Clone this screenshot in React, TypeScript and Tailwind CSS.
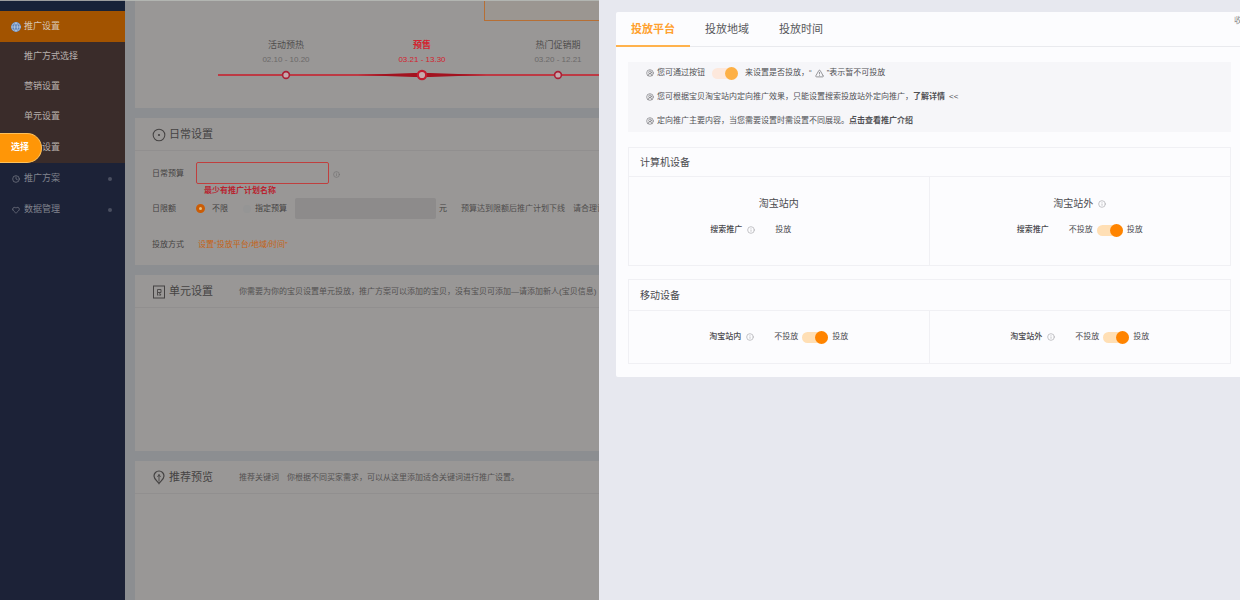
import React, { useState } from "react";
import { Globe, CircleDot, Info, Clock, Heart, TriangleAlert, CircleUserRound } from "lucide-react";

type ToggleProps = { label: string; soft?: boolean };

function Toggle({ label, soft }: ToggleProps) {
  const [on, setOn] = useState(true);
  return (
    <label className="flex h-[14px] w-[26px] shrink-0 items-center">
      <input
        type="checkbox"
        className="peer sr-only"
        aria-label={label}
        checked={on}
        onChange={() => setOn(!on)}
      />
      <span
        className={
          "flex h-[11px] w-full items-center rounded-full " +
          (on ? "justify-end " : "justify-start ") +
          (soft ? "bg-[#fde8dc]" : "bg-[#ffdfb5]")
        }
      >
        <span
          className={"h-[13px] w-[13px] shrink-0 rounded-full " + (soft ? "bg-[#fdb046]" : "bg-[#ff8400]")}
        />
      </span>
    </label>
  );
}

const steps = [
  { name: "活动预热", date: "02.10 - 10.20", active: false },
  { name: "预售", date: "03.21 - 13.30", active: true },
  { name: "热门促销期", date: "03.20 - 12.21", active: false },
];

function Steps() {
  return (
    <ol className="mt-[17px] flex w-max pl-[83px]">
      {steps.map((s) => (
        <li
          key={s.name}
          className={"flex w-[136px] flex-col items-center " + (s.active ? "text-[#d3232f]" : "text-[#4f4d4d]")}
        >
          <span className={"text-[9px] leading-[14px] " + (s.active ? "font-bold" : "")}>{s.name}</span>
          <span
            className={"mt-px text-[8px] leading-[14px] " + (s.active ? "" : "text-[#6b6969]")}
          >
            {s.date}
          </span>
          <svg className="block h-4 w-full" viewBox="0 0 136 16" aria-hidden="true">
            <path d="M0 8H136" stroke="#bd3a44" strokeWidth="2" />
            {s.active && <path d="M4 8L60 6H76L132 8L76 10H60Z" fill="#a3121f" />}
            <circle
              cx="68"
              cy="8"
              r={s.active ? 4.2 : 3.4}
              fill="#c6a9ad"
              stroke={s.active ? "#c11c30" : "#a91f35"}
              strokeWidth={s.active ? 2.2 : 1.6}
            />
          </svg>
        </li>
      ))}
    </ol>
  );
}

type PanelProps = {
  icon: React.ReactNode;
  title: string;
  note?: string;
  className?: string;
  children?: React.ReactNode;
};

function Panel({ icon, title, note, className, children }: PanelProps) {
  return (
    <section className={"bg-[#999796] " + (className ?? "")}>
      <header className="flex h-[33px] items-center whitespace-nowrap border-b border-[#918f8f] pl-[17px] pt-px">
        {icon}
        <h2 className="ml-[3px] w-[70px] shrink-0 text-[11px] text-[#454343]">{title}</h2>
        {note && <p className="text-[8px] text-[#535151]">{note}</p>}
      </header>
      {children}
    </section>
  );
}

function HintIcon() {
  return <Info className="h-[8px] w-[8px] shrink-0 text-[#a9a9ad]" aria-hidden="true" />;
}

function ToggleRow({ name, hint }: { name: string; hint?: boolean }) {
  return (
    <div className="flex items-center justify-center text-[8px] leading-[14px]">
      <span className="font-medium">{name}</span>
      {hint && (
        <span className="ml-[5px]">
          <HintIcon />
        </span>
      )}
      <span className="ml-[20px] mr-[4px]">不投放</span>
      <Toggle label={name} />
      <span className="ml-[4px]">投放</span>
    </div>
  );
}

const subItems = ["推广方式选择", "营销设置", "单元设置"];

function TipIcon() {
  return <CircleUserRound className="mr-[3px] h-[8px] w-[8px] shrink-0 text-[#77777b]" aria-hidden="true" />;
}

export default function App() {
  const [tab, setTab] = useState("投放平台");
  return (
    <div className="flex min-h-screen overflow-hidden bg-[#8c8e91] font-['Liberation_Sans','Noto_Sans_CJK_SC',sans-serif] text-[#4a4a4e]">
      <nav className="w-[125px] shrink-0 border-t border-[#9c9e9e] bg-[#1c2237] text-[9px]">
        <div className="h-[10px] bg-[#172238]" />
        <a href="#promotion" className="flex h-[31px] items-center bg-[#a25300] pl-[11px] text-[#d8c6b4]">
          <Globe className="mr-[3px] h-[10px] w-[10px] rounded-full bg-[#5d82b8] text-[#b9c9df]" />
          推广设置
        </a>
        <ul className="bg-[#3a2c2a] text-[#b7b0ad]">
          {subItems.map((s) => (
            <li key={s}>
              <a href="#sub" className="flex h-[30px] items-center pl-[24px]">
                {s}
              </a>
            </li>
          ))}
          <li className="flex h-[31px] items-center">
            <button
              type="button"
              className="h-[30px] w-[42px] shrink-0 rounded-r-full border border-l-0 border-[#ffc15a] bg-[#ff9607] pr-px text-[9px] font-bold text-white"
            >
              选择
            </button>
            <a href="#sub">设置</a>
          </li>
        </ul>
        <a href="#reports" className="flex h-[31px] items-center pl-[12px] pr-[13px] text-[#81848e]">
          <Clock className="mr-[4px] h-[8px] w-[8px]" />
          推广方案
          <span className="ml-auto h-[4px] w-[4px] rounded-full bg-[#4a4f60]" />
        </a>
        <a href="#tools" className="flex h-[31px] items-center pl-[12px] pr-[13px] text-[#81848e]">
          <Heart className="mr-[4px] h-[8px] w-[8px]" />
          数据管理
          <span className="ml-auto h-[4px] w-[4px] rounded-full bg-[#4a4f60]" />
        </a>
      </nav>

      <main className="flex w-[474px] shrink-0 flex-col gap-[10px] overflow-hidden border-t border-[#b2b5b1] pl-[10px]">
        <section className="h-[107px] bg-[#999796]">
          <div className="ml-auto h-[20px] w-[115px] border-b border-l border-[#b66f35] bg-[#9b9691]" />
          <Steps />
        </section>

        <Panel
          title="日常设置"
          className="h-[147px]"
          icon={<CircleDot className="h-[14px] w-[14px] text-[#454343]" strokeWidth={1.8} />}
        >
          <form className="whitespace-nowrap pl-[17px] text-[8px] text-[#454343]">
            <div className="flex h-[34px] items-end">
              <label htmlFor="name" className="mb-[5px] w-[44px]">
                日常预算
              </label>
              <input
                id="name"
                className="mb-px h-[22px] w-[133px] rounded-[2px] border border-[#bf3f3e] bg-transparent px-1 outline-none"
              />
              <Info className="mb-[7px] ml-[4px] h-[7px] w-[7px] text-[#706e6e]" />
            </div>
            <p className="pl-[52px] text-[8px] font-bold leading-[11px] text-[#b8232f]">最少有推广计划名称</p>
            <div className="mt-[2px] flex h-[21px] items-center">
              <span className="w-[44px] shrink-0">日限额</span>
              <label className="flex shrink-0 items-center">
                <input
                  type="radio"
                  name="limit"
                  defaultChecked
                  className="mr-[7px] h-[9px] w-[9px] appearance-none rounded-full border-[3px] border-[#cb5c05] bg-[#e8c17e]"
                />
                不限
              </label>
              <label className="ml-[15px] flex shrink-0 items-center">
                <input
                  type="radio"
                  name="limit"
                  className="mr-[4px] h-[8px] w-[8px] appearance-none rounded-full bg-[#959595]"
                />
                指定预算
              </label>
              <input
                disabled
                aria-label="指定预算金额"
                className="ml-[8px] h-[21px] w-[141px] shrink-0 rounded-[2px] bg-[#8d8b8b]"
              />
              <span className="ml-[3px] w-[22px] shrink-0">元</span>
              <span className="text-[#4f4d4d]">预算达到限额后推广计划下线</span>
              <span className="ml-[8px] text-[#4f4d4d]">请合理设置</span>
            </div>
            <div className="mt-[19px] flex h-[14px] items-center">
              <span className="w-[46px]">投放方式</span>
              <a href="#platform" className="text-[#c56316]">
                设置“投放平台/地域/时间”
              </a>
            </div>
          </form>
        </Panel>

        <Panel
          title="单元设置"
          className="h-[176px]"
          note="你需要为你的宝贝设置单元投放，推广方案可以添加的宝贝，没有宝贝可添加—请添加新人(宝贝信息)"
          icon={
            <svg className="h-[14px] w-[14px]" viewBox="0 0 14 14" fill="none" stroke="#454343" aria-hidden="true">
              <rect x="1.5" y="1" width="11" height="12" />
              <path d="M5.5 10.5V4.5H9V7.5H6M7 7.5L9 10H6.5" strokeWidth="0.9" />
            </svg>
          }
        />

        <Panel
          title="推荐预览"
          className="flex-1"
          note="推荐关键词　你根据不同买家需求，可以从这里添加适合关键词进行推广设置。"
          icon={
            <svg className="h-[15px] w-[14px]" viewBox="0 0 14 15" fill="none" stroke="#454343" aria-hidden="true">
              <path d="M7 13.5C6 11.5 2 9.5 2 6A5 5 0 0 1 12 6C12 9.5 8 11.5 7 13.5Z" strokeWidth="1.2" />
              <path d="M7 4.5V11.5M7 4.5L5.5 7M7 4.5L8.5 7" strokeWidth="0.9" />
            </svg>
          }
        />
      </main>

      <aside className="min-w-0 flex-1 bg-[#e7e8ef] pl-[17px] pt-[12px]">
        <div className="h-[365px] rounded-l-[2px] bg-[#fcfcfe]">
          <div className="flex h-[35px] border-b border-[#e9eaee]" role="tablist">
            {["投放平台", "投放地域", "投放时间"].map((t) => (
              <button
                key={t}
                type="button"
                role="tab"
                aria-selected={tab === t}
                onClick={() => setTab(t)}
                className={
                  "h-[35px] w-[74px] border-b-2 pt-[2px] text-[11px] " +
                  (tab === t ? "border-[#ffb24d] font-bold text-[#ffa02e]" : "border-transparent text-[#58585b]")
                }
              >
                {t}
              </button>
            ))}
            <a href="#close" className="ml-auto w-[6px] overflow-hidden whitespace-nowrap text-[8px] leading-[17px] text-[#8d8d91]">
              收起
            </a>
          </div>

          <div className="ml-[12px] mr-[9px] mt-[15px] flex h-[70px] flex-col justify-between whitespace-nowrap bg-[#f6f6f9] py-[4px] pl-[18px] text-[8px] leading-[14px] text-[#505054]">
            <p className="flex items-center">
              <TipIcon />
              您可通过按钮
              <span className="ml-[7px] mr-[7px]">
                <Toggle label="投放按钮" soft />
              </span>
              来设置是否投放，“
              <TriangleAlert className="mx-[3px] h-[9px] w-[9px] text-[#77777b]" />
              ”表示暂不可投放
            </p>
            <p className="flex items-center">
              <TipIcon />
              您可根据宝贝淘宝站内定向推广效果，只能设置搜索投放站外定向推广，
              <b className="font-bold">了解详情</b>
              <span className="ml-[4px]">&lt;&lt;</span>
            </p>
            <p className="flex items-center">
              <TipIcon />
              定向推广主要内容，当您需要设置时需设置不同展现。
              <b className="font-bold">点击查看推广介绍</b>
            </p>
          </div>

          <section className="ml-[12px] mr-[9px] mt-[15px] border border-[#f0f0f4]">
            <h3 className="flex h-[29px] items-center border-b border-[#f0f0f4] pl-[11px] text-[10px]">计算机设备</h3>
            <div className="grid h-[88px] grid-cols-2 divide-x divide-[#f0f0f4]">
              <div className="pt-[20px]">
                <h4 className="text-center text-[10px] leading-[14px]">淘宝站内</h4>
                <div className="mx-auto mt-[12px] flex w-[137px] items-center text-[8px] leading-[14px]">
                  <span className="mr-[5px] font-medium">搜索推广</span>
                  <HintIcon />
                  <span className="ml-[20px]">投放</span>
                </div>
              </div>
              <div className="pt-[20px]">
                <h4 className="flex items-center justify-center gap-[5px] text-[10px] leading-[14px]">
                  淘宝站外
                  <HintIcon />
                </h4>
                <div className="mt-[12px]">
                  <ToggleRow name="搜索推广" />
                </div>
              </div>
            </div>
          </section>

          <section className="ml-[12px] mr-[9px] mt-[13px] border border-[#f0f0f4]">
            <h3 className="flex h-[31px] items-center border-b border-[#f0f0f4] pl-[11px] text-[10px]">移动设备</h3>
            <div className="grid h-[52px] grid-cols-2 divide-x divide-[#f0f0f4]">
              <div className="pt-[19px]">
                <ToggleRow name="淘宝站内" hint />
              </div>
              <div className="pt-[19px]">
                <ToggleRow name="淘宝站外" hint />
              </div>
            </div>
          </section>
        </div>
      </aside>
    </div>
  );
}
